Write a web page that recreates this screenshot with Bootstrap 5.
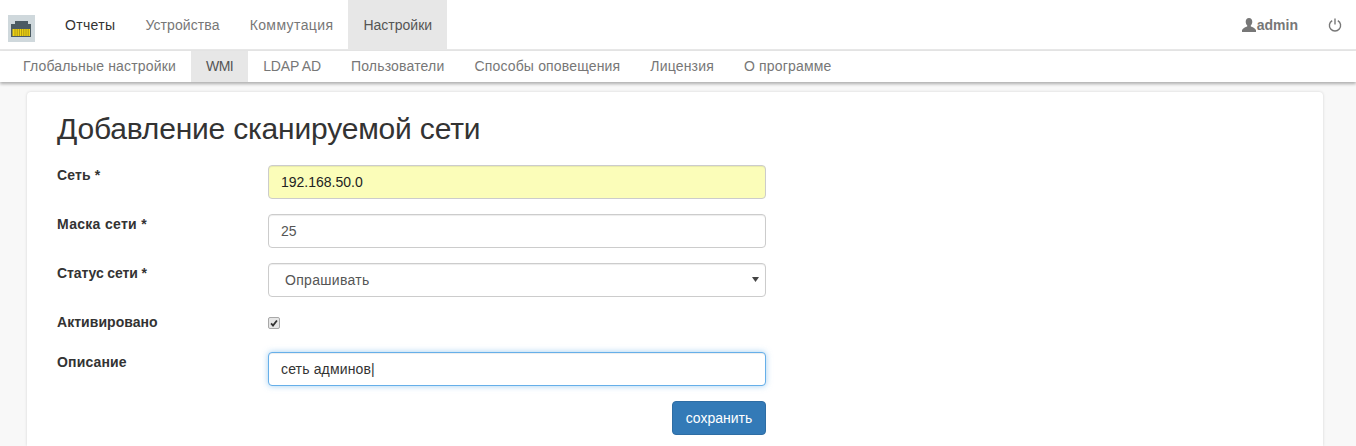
<!DOCTYPE html>
<html lang="ru">
<head>
<meta charset="utf-8">
<title>Сети</title>
<link href="https://cdn.jsdelivr.net/npm/bootstrap@5.3.0/dist/css/bootstrap.min.css" rel="stylesheet">
<style>
html,body{height:446px;overflow:hidden}
body{background:#f8f8f8;font-family:"Liberation Sans",Arial,sans-serif;font-size:14px;color:#333;line-height:20px}
.top-bar{height:51px;background:#fff;border-bottom:2px solid #e7e7e7}
.brand-box{width:27px;height:27px;margin:15px 0 0 8px;background:#cfd8dc;line-height:0}
.top-link{display:block;height:50px;padding:15px;color:#777;text-decoration:none}
.top-link.is-dark{color:#333;letter-spacing:.33px}
.top-link.ls-a{letter-spacing:.1px}
.top-link.ls-b{letter-spacing:.4px}
.top-link.is-on{background:#e7e7e7;color:#555}
.sub-bar{height:31px;background:#fff;box-shadow:0 2px 3px rgba(0,0,0,.3);position:relative}
.sub-list{padding-left:8px}
.sub-link{display:block;height:31px;padding:5px 15px;color:#777;text-decoration:none;letter-spacing:.17px}
.sub-link.is-on{background:#e7e7e7;color:#555;letter-spacing:-.55px}
.sub-link.ls-c{letter-spacing:-.15px}
.user-link{display:flex;align-items:center;height:50px;color:#777;font-weight:700;text-decoration:none;margin-right:30px}
.user-link svg{margin-right:1px}
.power-link{display:flex;align-items:center;height:50px;margin-right:14px}
.sheet{margin:10px 33px 0 27px;height:354px;background:#fff;border-radius:4px 4px 0 0;box-shadow:0 0 3px rgba(0,0,0,.15);padding:0 30px}
.sheet-title{font-size:30px;line-height:33px;font-weight:500;margin:0;padding-top:20px;color:#333;font-family:"Liberation Sans",Arial,sans-serif;height:73px;letter-spacing:-.19px}
.field-row{display:flex;margin-bottom:15px;width:709px}
.field-label{width:211px;flex:none;font-weight:700;margin:0;color:#333;letter-spacing:.15px}
.field-label.ls-d{letter-spacing:.3px}
.field-label.ls-e{letter-spacing:-.1px}
.field-label.ls-f{letter-spacing:.05px}
.field-ctl{flex:1}
.field-ctl .form-control,.field-ctl .form-select{height:34px;padding:6px 12px;font-size:14px;line-height:20px;color:#555;border:1px solid #ccc;border-radius:4px;box-shadow:inset 0 1px 1px rgba(0,0,0,.075);font-family:inherit}
.field-ctl .form-select{padding-left:16px;letter-spacing:.3px;background-size:7px;background-position:right 6px center;background-image:url("data:image/svg+xml,%3Csvg xmlns='http://www.w3.org/2000/svg' viewBox='0 0 8 6'%3E%3Cpath fill='%23444' d='M0 0h8L4 6z'/%3E%3C/svg%3E")}
.field-ctl .tinted{background:#fbfdb9;color:#222}
.field-ctl .focused{border-color:#66afe9;box-shadow:inset 0 1px 1px rgba(0,0,0,.075),0 0 6px rgba(102,175,233,.6);color:#333;letter-spacing:.15px}
.check-row{height:25px}
.tick{appearance:none;width:12px;height:12px;margin:5px 0 0 0;display:block;border:1px solid #a8a8a8;border-radius:2px;background:#e6e6e6 url("data:image/svg+xml,%3Csvg xmlns='http://www.w3.org/2000/svg' viewBox='0 0 12 12'%3E%3Cpath fill='none' stroke='%23333' stroke-width='2.200' d='M2.500 6.500l2.300 2.500 4.700-6'/%3E%3C/svg%3E") center/10px no-repeat}
.save-btn{background:#337ab7;border:1px solid #2e6da4;color:#fff;font-size:14px;line-height:20px;padding:6px 12px;border-radius:4px;height:34px;width:94px}
.save-row{width:709px}
</style>
</head>
<body>
<div class="top-bar d-flex">
  <div class="brand-box">
    <svg width="27" height="27" viewBox="0 0 27 27"><path fill="#4c5b63" d="M7 6h13v3h3v13H3V9h4z"/><rect x="4.500" y="14" width="17.500" height="7" fill="#f0d414"/><path stroke="#9a8510" stroke-width=".8" d="M7 14v7M9.200 14v7M11.400 14v7M13.600 14v7M15.800 14v7M18 14v7M20.200 14v7"/></svg>
  </div>
  <ul class="nav" style="margin-left:15px">
    <li class="nav-item"><a class="top-link is-dark" href="#">Отчеты</a></li>
    <li class="nav-item"><a class="top-link ls-a" href="#">Устройства</a></li>
    <li class="nav-item"><a class="top-link ls-b" href="#">Коммутация</a></li>
    <li class="nav-item"><a class="top-link is-on" href="#">Настройки</a></li>
  </ul>
  <div class="ms-auto d-flex">
    <a class="user-link" href="#"><svg width="14" height="14" viewBox="0 0 14 14"><path fill="#777" d="M7 0c2 0 3.300 1.500 3.300 3.700 0 1.500-.6 2.800-1.500 3.600v1.200c2 .6 4 1.500 5.200 3.500v2H0v-2c1.200-2 3.200-2.900 5.200-3.500V7.300C4.300 6.500 3.700 5.200 3.700 3.700 3.700 1.500 5 0 7 0z"/></svg>admin</a>
    <a class="power-link" href="#"><svg width="14" height="14" viewBox="0 0 15 15" fill="none" stroke="#777" stroke-width="1.500"><path d="M4.500 2.700a6 6 0 1 0 6 0"/><path d="M7.500 .5v6.500"/></svg></a>
  </div>
</div>
<div class="sub-bar">
  <ul class="nav sub-list">
    <li class="nav-item"><a class="sub-link" href="#">Глобальные настройки</a></li>
    <li class="nav-item"><a class="sub-link is-on" href="#">WMI</a></li>
    <li class="nav-item"><a class="sub-link ls-c" href="#">LDAP AD</a></li>
    <li class="nav-item"><a class="sub-link" href="#">Пользователи</a></li>
    <li class="nav-item"><a class="sub-link" href="#">Способы оповещения</a></li>
    <li class="nav-item"><a class="sub-link" href="#">Лицензия</a></li>
    <li class="nav-item"><a class="sub-link" href="#">О программе</a></li>
  </ul>
</div>
<div class="sheet">
  <h3 class="sheet-title">Добавление сканируемой сети</h3>
  <form>
    <div class="field-row"><label class="field-label">Сеть *</label><div class="field-ctl"><input class="form-control tinted" value="192.168.50.0"></div></div>
    <div class="field-row"><label class="field-label ls-d">Маска сети *</label><div class="field-ctl"><input class="form-control" value="25"></div></div>
    <div class="field-row"><label class="field-label ls-e">Статус сети *</label><div class="field-ctl"><select class="form-select"><option>Опрашивать</option></select></div></div>
    <div class="field-row check-row"><label class="field-label ls-f">Активировано</label><div class="field-ctl"><input type="checkbox" class="tick" checked></div></div>
    <div class="field-row"><label class="field-label">Описание</label><div class="field-ctl"><input class="form-control focused" value="сеть админов|"></div></div>
    <div class="save-row d-flex justify-content-end"><button type="button" class="save-btn">сохранить</button></div>
  </form>
</div>
<script src="https://cdn.jsdelivr.net/npm/bootstrap@5.3.0/dist/js/bootstrap.bundle.min.js"></script>
</body>
</html>
